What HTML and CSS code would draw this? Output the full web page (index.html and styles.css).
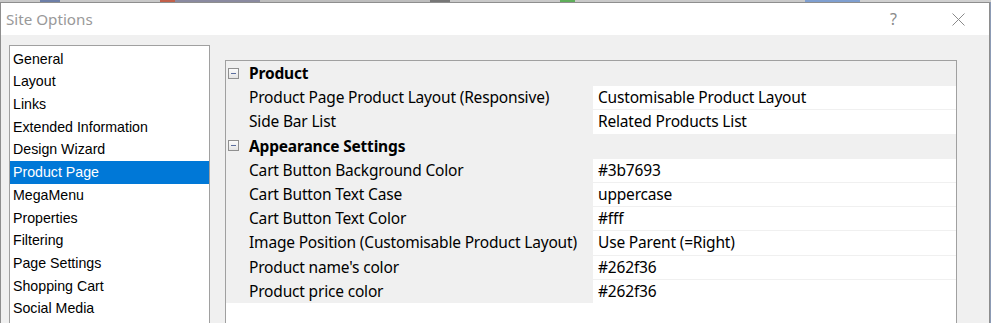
FILE: index.html
```html
<html>
<head>
	<title>Site Options</title>
	<link rel="stylesheet" href="styles.css">
</head>
<body>
	<div class="desktop"></div>
	<div class="window">
		<header class="titlebar">
			<span class="title">Site Options</span>
			<span class="help">?</span>
			<span class="close">
				<svg width="13" height="13" viewBox="0 0 13 13"><path d="M0.5 0.5 L12.5 12.5 M12.5 0.5 L0.5 12.5" stroke="#8a8a8a" stroke-width="1" fill="none"/></svg>
			</span>
		</header>
		<div class="client">
			<ul class="pagelist">
				<li>General</li>
				<li>Layout</li>
				<li>Links</li>
				<li>Extended Information</li>
				<li>Design Wizard</li>
				<li class="selected">Product Page</li>
				<li>MegaMenu</li>
				<li>Properties</li>
				<li>Filtering</li>
				<li>Page Settings</li>
				<li>Shopping Cart</li>
				<li>Social Media</li>
			</ul>
			<div class="propgrid">
				<div class="category"><span class="toggle"></span>Product</div>
				<div class="label">Product Page Product Layout (Responsive)</div>
				<div class="value">Customisable Product Layout</div>
				<div class="label">Side Bar List</div>
				<div class="value">Related Products List</div>
				<div class="category"><span class="toggle"></span>Appearance Settings</div>
				<div class="label">Cart Button Background Color</div>
				<div class="value">#3b7693</div>
				<div class="label">Cart Button Text Case</div>
				<div class="value">uppercase</div>
				<div class="label">Cart Button Text Color</div>
				<div class="value">#fff</div>
				<div class="label">Image Position (Customisable Product Layout)</div>
				<div class="value">Use Parent (=Right)</div>
				<div class="label">Product name's color</div>
				<div class="value">#262f36</div>
				<div class="label">Product price color</div>
				<div class="value">#262f36</div>
			</div>
		</div>
	</div>
</body>
</html>
```

FILE: styles.css
```css
*, *:before, *:after {
	box-sizing: border-box;
}
body {
	margin: 0;
	width: 991px;
	height: 323px;
	overflow: hidden;
	background: #8c9bb5;
	font-family: "Noto Sans", sans-serif;
	color: #000;
}
.desktop {
	height: 2px;
	background: linear-gradient(90deg, #c9c9c9 0, #c9c9c9 40px, #6d7fa8 40px, #6d7fa8 60px, #c8c8c8 60px, #c8c8c8 160px, #c2604a 160px, #c2604a 175px, #8a8aa0 175px, #8a8aa0 260px, #bdbdbd 260px, #bdbdbd 430px, #777 430px, #777 450px, #c9c9c9 450px, #c9c9c9 560px, #5fae5a 560px, #5fae5a 575px, #c9c9c9 575px, #c9c9c9 805px, #7f9fd0 805px, #7f9fd0 860px, #d0d0d0 860px);
}
.window {
	width: 990px;
	height: 321px;
	border: 1px solid #8e8e8e;
	border-bottom: 0;
	background: #f0f0f0;
}
.titlebar {
	height: 32px;
	background: #fff;
	display: flex;
	align-items: center;
	padding-left: 5px;
}
.title {
	font-size: 15.2px;
	color: #999;
	flex: 1;
}
.help {
	font-size: 16px;
	color: #8a8a8a;
	margin-right: 55px;
}
.close {
	display: flex;
	margin-right: 24px;
}
.client {
	display: flex;
	align-items: flex-start;
	gap: 15px;
	padding: 10px 0 0 8px;
}
/* list of option pages, runs off the bottom of the shot */
.pagelist {
	width: 201px;
	height: 278px;
	margin: 0;
	padding: 1.7px 0 0 0;
	list-style: none;
	background: #fff;
	border: 1px solid #a0a0a0;
	border-bottom: 0;
	font-family: "Liberation Sans", Arial, sans-serif;
	font-size: 14.2px;
}
.pagelist li {
	height: 22.7px;
	line-height: 22.7px;
	padding-left: 3px;
	white-space: nowrap;
}
.pagelist li.selected {
	background: #0078d7;
	color: #fff;
}
.propgrid {
	width: 732px;
	height: 263px;
	margin-top: 15px;
	border: 1px solid #a0a0a0;
	border-bottom: 0;
	background: #fff;
	display: grid;
	grid-template-columns: 367px 1fr;
	grid-auto-rows: 24.2px;
	align-content: start;
	font-size: 15.5px;
	letter-spacing: -0.18px;
}
.category {
	grid-column: span 2;
	display: flex;
	align-items: center;
	gap: 10px;
	padding-left: 2px;
	background: #f0f0f0;
	font-weight: bold;
}
.toggle {
	width: 11px;
	height: 11px;
	border: 1px solid #909090;
	background: linear-gradient(#fcfcfc, #e4e4e4);
	display: flex;
	align-items: center;
	justify-content: center;
}
.toggle:after {
	content: '';
	width: 5px;
	height: 1px;
	background: #5b6e9e;
}
.label {
	background: #f0f0f0;
	padding-left: 23px;
	line-height: 24.2px;
	white-space: nowrap;
}
.value {
	background: #fff;
	border-top: 1px solid #f0f0f0;
	padding-left: 5px;
	line-height: 23.2px;
	white-space: nowrap;
}
```
